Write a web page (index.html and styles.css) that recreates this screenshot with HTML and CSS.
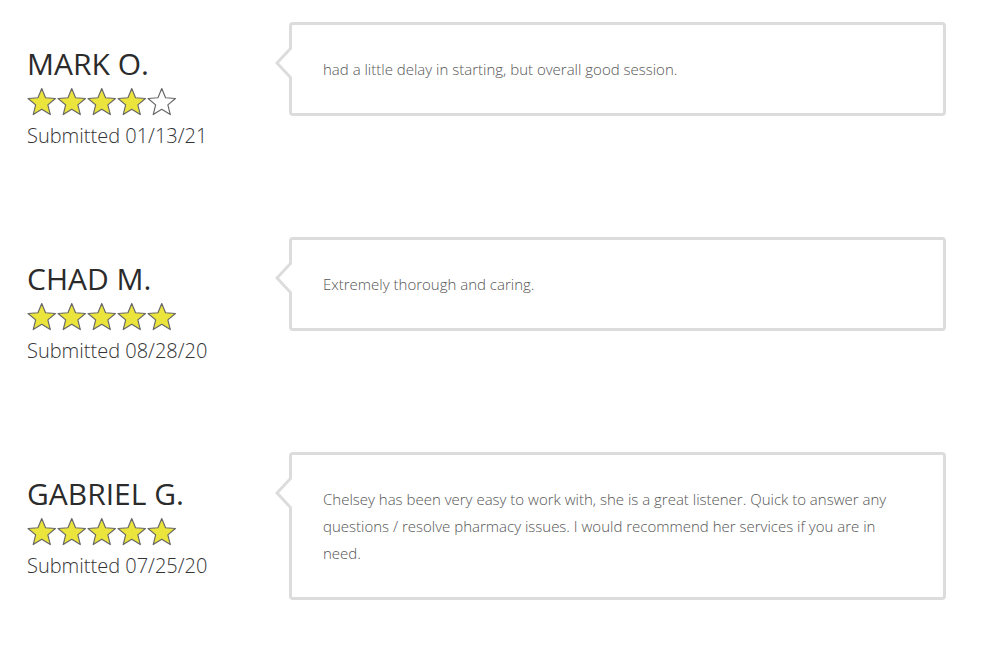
FILE: index.html
```html
<!DOCTYPE html>
<html lang="en">
<head>
    <meta charset="UTF-8">
    <meta name="viewport" content="width=device-width, initial-scale=1.0">
    <title>Reviews</title>
    <link rel="stylesheet" href="styles.css">
</head>
<body>
    <svg width="0" height="0" class="defs">
        <defs>
            <polygon id="star" points="14,1.5 17.6,10.2 27,10.9 19.8,17 22.1,26.2 14,21.2 5.9,26.2 8.2,17 1,10.9 10.4,10.2" stroke-linejoin="round"/>
        </defs>
    </svg>

    <div class="review">
        <div class="reviewer">
            <div class="name">MARK O.</div>
            <div class="stars">
                <svg class="star on" viewBox="0 0 28 28"><use href="#star"/></svg>
                <svg class="star on" viewBox="0 0 28 28"><use href="#star"/></svg>
                <svg class="star on" viewBox="0 0 28 28"><use href="#star"/></svg>
                <svg class="star on" viewBox="0 0 28 28"><use href="#star"/></svg>
                <svg class="star" viewBox="0 0 28 28"><use href="#star"/></svg>
            </div>
            <div class="date">Submitted 01/13/21</div>
        </div>
        <div class="bubble">had a little delay in starting, but overall good session.</div>
    </div>

    <div class="review">
        <div class="reviewer">
            <div class="name">CHAD M.</div>
            <div class="stars">
                <svg class="star on" viewBox="0 0 28 28"><use href="#star"/></svg>
                <svg class="star on" viewBox="0 0 28 28"><use href="#star"/></svg>
                <svg class="star on" viewBox="0 0 28 28"><use href="#star"/></svg>
                <svg class="star on" viewBox="0 0 28 28"><use href="#star"/></svg>
                <svg class="star on" viewBox="0 0 28 28"><use href="#star"/></svg>
            </div>
            <div class="date">Submitted 08/28/20</div>
        </div>
        <div class="bubble">Extremely thorough and caring.</div>
    </div>

    <div class="review">
        <div class="reviewer">
            <div class="name">GABRIEL G.</div>
            <div class="stars">
                <svg class="star on" viewBox="0 0 28 28"><use href="#star"/></svg>
                <svg class="star on" viewBox="0 0 28 28"><use href="#star"/></svg>
                <svg class="star on" viewBox="0 0 28 28"><use href="#star"/></svg>
                <svg class="star on" viewBox="0 0 28 28"><use href="#star"/></svg>
                <svg class="star on" viewBox="0 0 28 28"><use href="#star"/></svg>
            </div>
            <div class="date">Submitted 07/25/20</div>
        </div>
        <div class="bubble">Chelsey has been very easy to work with, she is a great listener. Quick to answer any questions / resolve pharmacy issues. I would recommend her services if you are in need.</div>
    </div>
</body>
</html>
```

FILE: styles.css
```css
body {margin:0; padding:22px 44px 0 27px; font-family:"Open Sans", "Liberation Sans", sans-serif; color:#333; background:#fff}
.defs {position:absolute}
.review {display:flex; align-items:flex-start; min-height:215px}
.reviewer {width:262px; flex:none; padding-top:24px}
.name {font-size:30px; line-height:36px; color:#2b2b2b}
.stars {display:flex; gap:0.5px; margin-top:5px; height:30px}
.star {width:29.5px; height:29.5px; fill:#fff; stroke:#666; stroke-width:1.1}
.star.on {fill:#ebe43c}
.date {font-size:20px; font-weight:300; line-height:28px; margin-top:5px; color:#333}
.bubble {position:relative; flex:1; border:3px solid #dcdcdc; border-radius:4px; padding:31px 31px 30px; font-size:15px; font-weight:300; line-height:27px; color:#555}
.bubble::before {content:""; position:absolute; left:-17px; top:23px; border-style:solid; border-color:transparent #dcdcdc transparent transparent; border-width:15px 14px 15px 0}
.bubble::after {content:""; position:absolute; left:-13px; top:24px; border-style:solid; border-color:transparent #fff transparent transparent; border-width:14px 13px 14px 0}
```
